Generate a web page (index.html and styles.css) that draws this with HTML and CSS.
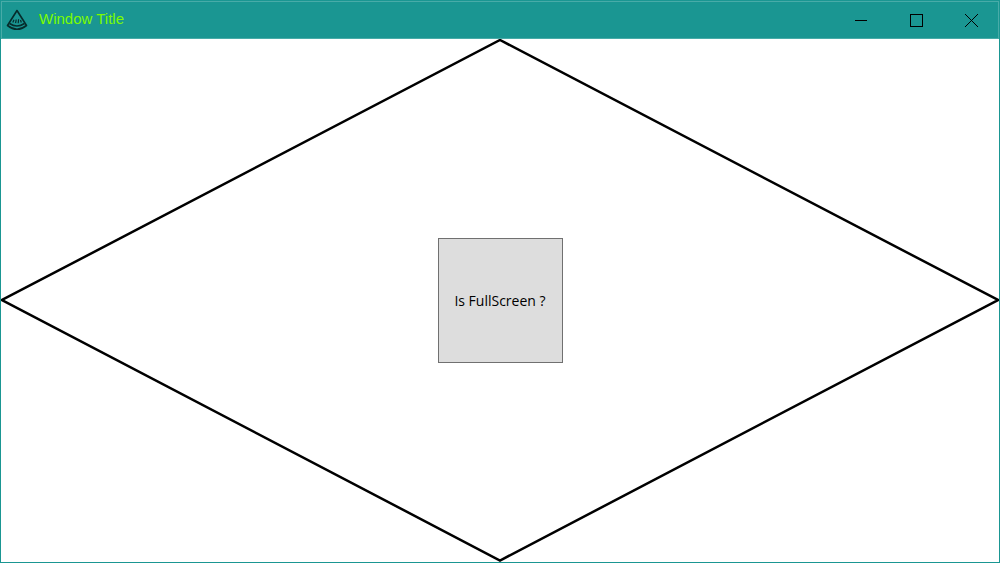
FILE: index.html
```html
<!DOCTYPE html>
<html lang="en">
<head>
<meta charset="utf-8">
<title>Window Title</title>
<link rel="stylesheet" href="styles.css">
</head>
<body>
<div class="window">
  <header class="titlebar">
    <svg class="app-icon" viewBox="0 0 22 22" aria-hidden="true">
      <path d="M11 1.500 L1.500 16.500 Q11 24 20.500 16.500 Z"/>
      <path d="M3.500 14.500 Q11 19.500 18.500 14.500"/>
      <path class="seeds" d="M8 10.800 L6.800 13.500 M10.200 10.500 L9.600 14.200 M12.600 10.300 L12.200 14.200 M14.500 11 L15.300 13.500"/>
    </svg>
    <h1 class="title">Window Title</h1>
    <div class="controls">
      <button class="control" type="button" aria-label="Minimize">
        <svg class="glyph" viewBox="0 0 13 13" shape-rendering="crispEdges"><path d="M0 6.500 H12"/></svg>
      </button>
      <button class="control" type="button" aria-label="Maximize">
        <svg class="glyph" viewBox="0 0 13 13" shape-rendering="crispEdges"><path d="M.5 .5 H12.500 V12.500 H.5 Z"/></svg>
      </button>
      <button class="control" type="button" aria-label="Close">
        <svg class="glyph" viewBox="0 0 13 13" shape-rendering="crispEdges"><path d="M0 0 L13 13 M13 0 L0 13"/></svg>
      </button>
    </div>
  </header>
  <main class="content">
    <svg class="diamond" viewBox="0 0 998 523" preserveAspectRatio="none" aria-hidden="true">
      <polygon points="499,1 997,261 499,521.500 1,261"/>
    </svg>
    <button class="fullscreen-button" type="button">Is FullScreen ?</button>
  </main>
</div>
</body>
</html>
```
FILE: styles.css
```css
* {
  box-sizing: border-box;
}

body {
  margin: 0;
}

.window {
  display: flex;
  flex-direction: column;
  height: 100vh;
  border: 1px solid #1a9692;
  background: #fff;
}

.titlebar {
  display: flex;
  align-items: center;
  flex: none;
  height: 38px;
  padding-left: 4px;
  border: 1px solid #48aba8;
  background: #1a9692;
}

.app-icon {
  width: 22px;
  height: 22px;
  margin-right: 11px;
  fill: none;
  stroke: #062c2b;
  stroke-width: 1.6;
  stroke-linejoin: round;
}

.seeds {
  stroke-width: 1.2;
}

.title {
  flex: 1;
  margin: 0;
  padding-bottom: 2px;
  color: #7cfc00;
  font: 15px/20px "Liberation Sans", Arial, sans-serif;
}

.controls {
  display: flex;
  align-self: stretch;
}

.control {
  display: flex;
  align-items: center;
  justify-content: center;
  width: 55px;
  padding: 1px 0 0 2px;
  border: 0;
  background: none;
}

.glyph {
  width: 13px;
  height: 13px;
  fill: none;
  stroke: #000;
  stroke-width: 1;
}

.content {
  display: grid;
  flex: 1;
  min-height: 0;
  place-items: center;
}

.diamond,
.fullscreen-button {
  grid-area: 1 / 1;
}

.diamond {
  width: 100%;
  height: 100%;
  min-height: 0;
  fill: none;
  stroke: #000;
  stroke-width: 2.5;
}

.fullscreen-button {
  z-index: 1;
  width: 125px;
  height: 125px;
  padding: 0;
  border: 1px solid #707070;
  border-radius: 0;
  background: #ddd;
  color: #000;
  font: 14px/20px "Open Sans", "Noto Sans", sans-serif;
}
```
